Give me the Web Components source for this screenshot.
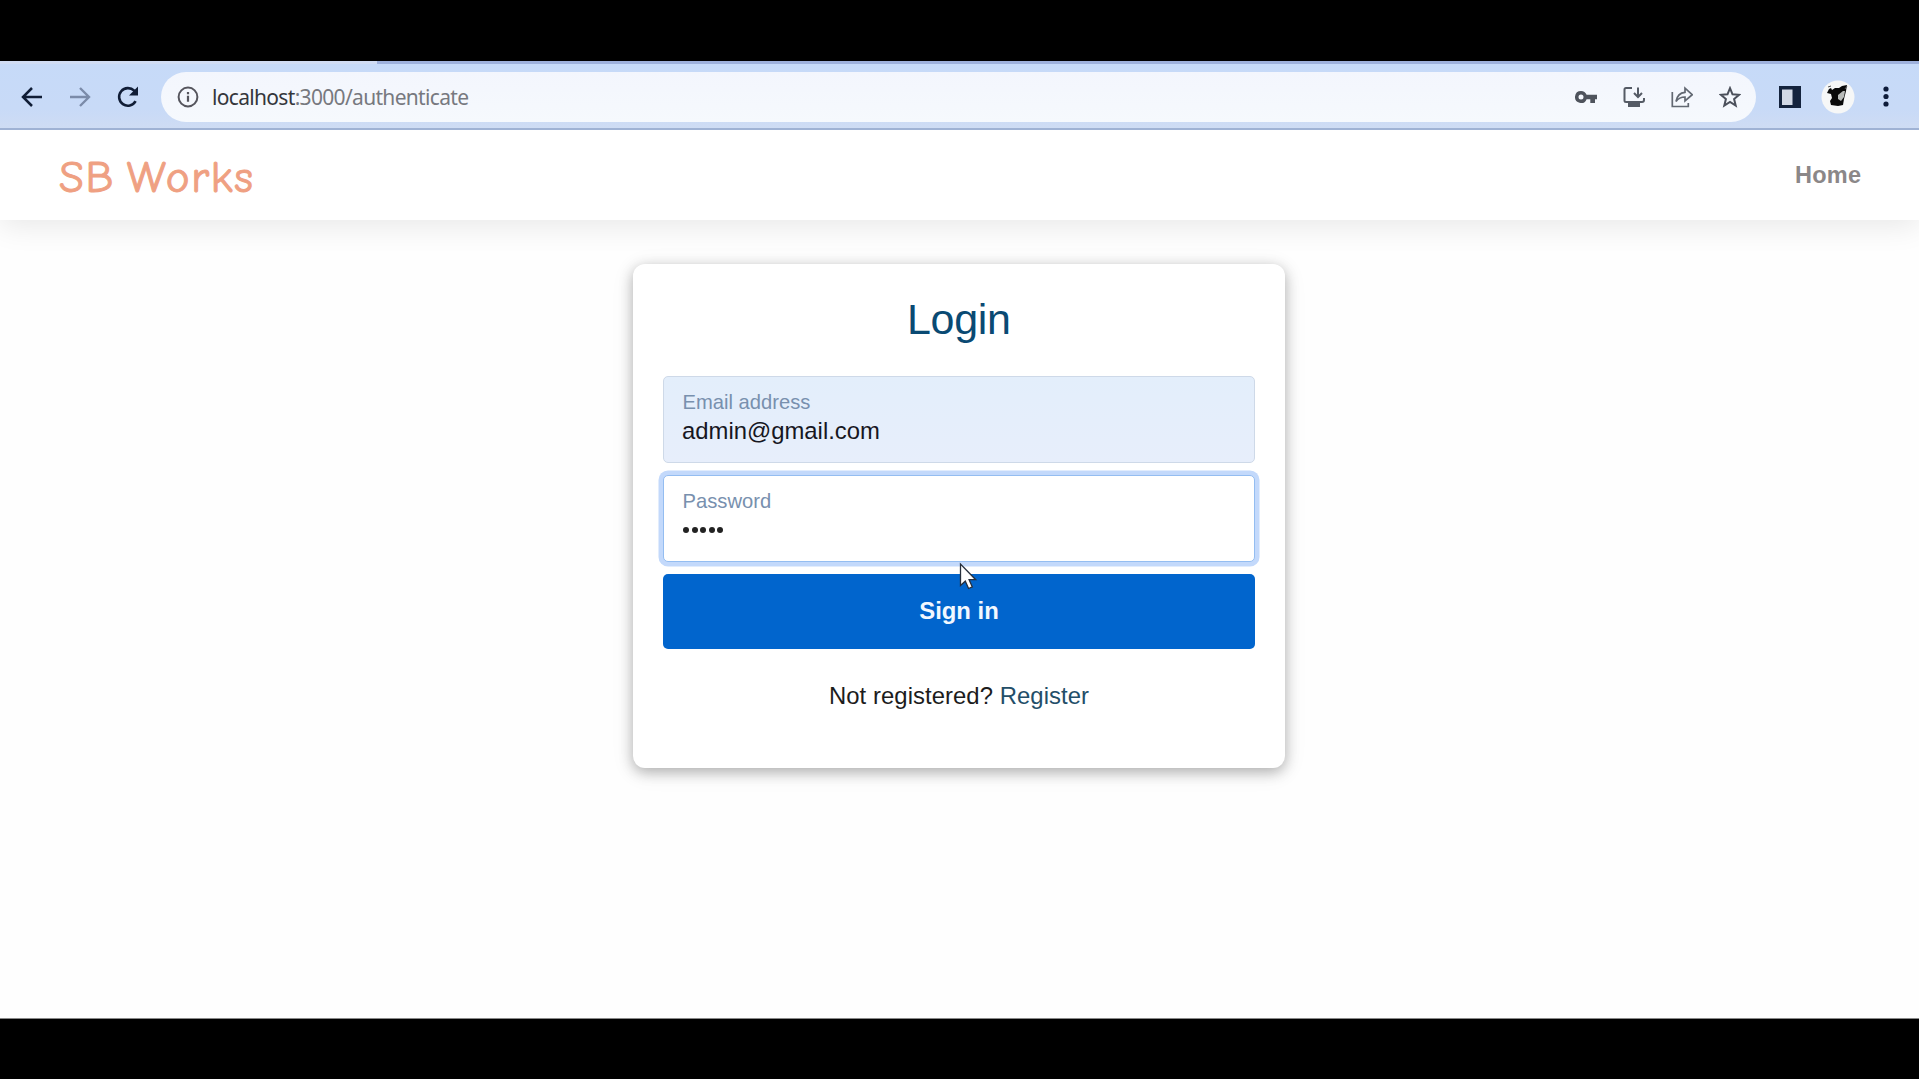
<!DOCTYPE html>
<html lang="en"><head><meta charset="utf-8"><title>SB Works</title>
<style>
body{margin:0;background:#000;font-family:"Liberation Sans",Arial,sans-serif}
</style></head><body>
<sb-screen></sb-screen>
<script>
const define=(name,html,init)=>customElements.define(name,class extends HTMLElement{
  connectedCallback(){
    if(this.shadowRoot)return;
    const t=document.createElement('template');
    t.innerHTML=html;
    this.attachShadow({mode:'open'}).append(t.content.cloneNode(true));
    if(init)init(this);
  }
});

// Text that spreads its letters over a given width
define('fit-text',`<style>:host{display:block;white-space:nowrap}span{display:inline-block}</style><span><slot></slot></span>`,el=>{
  const s=el.shadowRoot.querySelector('span'),n=el.textContent.length;
  const w=s.getBoundingClientRect().width;
  if(w&&el.hasAttribute('w')){
    const sp=(+el.getAttribute('w')-w)/(n-1);
    s.style.letterSpacing=sp+'px';s.style.marginRight=-sp+'px';
  }
});

define('browser-bar',`<style>
:host{display:flex;box-sizing:border-box;height:69px;align-items:center;padding:2px 20px 0 21px;
 background:linear-gradient(90deg,#d0dcf3 0 377px,#9eb1dc 377px) 0 0/100% 3px no-repeat,linear-gradient(#9fb2d4,#9fb2d4) 0 100%/100% 2px no-repeat,linear-gradient(#c6daf8 0,#c8daf7 70%,#cfdcf3 100%)}
svg{display:block;flex:none}
.nav{display:flex;gap:26px;margin-right:22px}
.box{flex:none;box-sizing:border-box;width:1595px;height:50px;border-radius:25px;background:linear-gradient(#f3f6fd,#f6f9fd);display:flex;align-items:center;padding:0 15px 0 16px}
.url{display:flex;font:21px/30px "Noto Sans","Open Sans",sans-serif;margin-left:13px;color:#77797f;flex:1}
.url b{font-weight:400;color:#34363b}
.icons{display:flex;gap:26px}
.right{display:flex;align-items:center;margin-left:23px}
</style>
<div class="nav">
<svg width="22" height="22" viewBox="0 0 22 22" fill="none" stroke="#101d36" stroke-width="2.5"><path d="M21 11H2.5M11 2L2 11l9 9"/></svg>
<svg width="22" height="22" viewBox="0 0 22 22" fill="none" stroke="#7b8ba9" stroke-width="2.4"><path d="M1 11h18.5M11 2l9 9-9 9"/></svg>
<svg width="22" height="22" viewBox="0 0 22 22" fill="none" stroke="#101d36" stroke-width="2.6"><path d="M18.6 15.2A8.8 8.8 0 1 1 17.2 4.7L19 6.8"/><path d="M21 .5v9h-9z" fill="#101d36" stroke="none"/></svg>
</div>
<div class="box">
<svg width="22" height="22" viewBox="0 0 22 22" fill="none" stroke="#55555d" stroke-width="2"><circle cx="11" cy="11" r="9.4"/><path d="M11 9.8v6M11 6v2.2" stroke-width="2.2"/></svg>
<div class="url"><fit-text w="257"><b>localhost</b>:3000/authenticate</fit-text></div>
<div class="icons">
<svg width="22" height="22" viewBox="0 0 22 22"><path fill="#4e535c" fill-rule="evenodd" d="M6 5a6 6 0 1 0 5.6 8.2h3.7V17H20v-3.8h2V8.8H11.6A6 6 0 0 0 6 5zm0 3.5a2.5 2.5 0 1 1 0 5 2.5 2.5 0 0 1 0-5z"/></svg>
<svg width="22" height="22" viewBox="0 0 22 22" fill="none" stroke="#555b65" stroke-width="2"><path d="M9 2H3q-1.500 0-1.500 1.500v11Q1.500 16 3 16h16q2 0 2-2v-2M15 1.500v9M11 7l4 4 4-4"/><path d="M5 19h12" stroke-width="4"/></svg>
<svg width="22" height="22" viewBox="0 0 22 22" fill="none" stroke="#626872" stroke-width="1.700"><path d="M1.300 6v14.500h16V17"/><path d="M5 15.500C6 9.500 9 6.700 14 6.300V2.200l7.200 6.500L14 15v-4c-4 0-6.500 1-9 4.500z"/></svg>
<svg width="22" height="22" viewBox="0 0 22 22"><path d="M11 2.200l2.500 6.100 6.600.5-5 4.300 1.600 6.400-5.700-3.500-5.700 3.500 1.600-6.400-5-4.300 6.600-.5z" fill="none" stroke="#4b505b" stroke-width="2"/></svg>
</div></div>
<div class="right">
<svg width="22" height="22" viewBox="0 0 22 22"><path fill="#14233d" d="M0 0h22v22H0z"/><path fill="#d2d9e6" d="M3 3.500h10.500V19H3z"/></svg>
<svg width="34" height="34" viewBox="0 0 34 34" style="margin-left:20px"><circle cx="17" cy="17" r="16.500" fill="#f6f7f7"/><path fill="#0a0a0a" d="M8 9l2-1 1 2 3-2 4 0 3-2 5-1-1 6-2 8-1 6-5 1-7-1-1-4 2-3-1-4-4-1z"/><path fill="#b8bbb9" d="M17 15l5-4 2 0-1 6-3 4-3-2z"/><path d="M7 7l3-1M24 9l2-3" stroke="#555"/></svg>
<svg width="6" height="22" viewBox="0 0 6 22" fill="#0d1b3a" style="margin-left:28px"><circle cx="3" cy="3" r="2.600"/><circle cx="3" cy="10.500" r="2.600"/><circle cx="3" cy="18" r="2.600"/></svg>
</div>`);

define('site-header',`<style>
:host{display:flex;box-sizing:border-box;height:90px;padding:0 58px;align-items:center;justify-content:space-between;background:#fff;box-shadow:0 6px 28px rgba(0,0,0,.09);position:relative}
.logo{font:400 45px/60px "Comic Sans MS","Comic Neue","Noto Sans",sans-serif;color:#efa082;-webkit-text-stroke:1px #efa082;word-spacing:-5px;padding:3px 0 0 1px}
.home{font:bold 23.5px/30px "Liberation Sans",Arial,sans-serif;color:#8b8788}
</style><fit-text class="logo" w="194">SB Works</fit-text><fit-text class="home" w="66">Home</fit-text>`);

define('float-field',`<style>
:host{display:block;box-sizing:border-box;height:87px;border:1px solid #ced9e8;border-radius:5px;padding:13px 18px;background:#fff}
:host([filled]){background:linear-gradient(#e3eefb,#e7eefb)}
:host([focused]){border-color:#94bdf1;box-shadow:0 0 0 4.500px #c3d9fb}
.l{font-size:20.200px;line-height:24px;color:#7890ae;margin-left:.5px}
.v{font-size:23.870px;line-height:30px;margin-top:2px;color:#17171f}
</style><div class="l"><slot name="label"></slot></div><div class="v"><slot></slot></div>`);

define('pass-dots',`<style>:host{display:flex;gap:2.500px;height:30px;align-items:center;padding-left:1px}i{width:6px;height:6px;border-radius:50%;background:#222}</style><i></i><i></i><i></i><i></i><i></i>`);

define('login-card',`<style>
:host{display:flex;flex-direction:column;box-sizing:border-box;width:652px;height:504px;margin-right:1px;border-radius:12px;background:#fff;padding:30px;box-shadow:0 4px 14px rgba(0,0,0,.28),0 4px 24px rgba(0,0,0,.08)}
h2{margin:0 0 32px;font:400 43px/50px "Liberation Sans",Arial,sans-serif;color:#0a4a73;display:flex;justify-content:center}
float-field+float-field{margin-top:12px}
button{border:0;margin:12px 0 0;padding:0 0 1px;height:75px;border-radius:5px;background:#0165cd;color:#f2f8ff;font:bold 23.870px/30px "Liberation Sans",Arial,sans-serif}
p{margin:29px 0 0;font-size:23.870px;line-height:36px;color:#1c1c1c;display:flex;justify-content:center}
a{color:#234e68}
</style>
<h2><fit-text w="104">Login</fit-text></h2>
<float-field filled><span slot="label">Email address</span>admin@gmail.com</float-field>
<float-field focused><span slot="label">Password</span><pass-dots></pass-dots></float-field>
<button>Sign in</button>
<p><fit-text w="260">Not registered? <a>Register</a></fit-text></p>`);

define('mouse-pointer',`<style>:host{display:block;position:absolute;left:959px;top:562px}svg{display:block}</style>
<svg width="20" height="30" viewBox="0 0 20 30"><path d="M1.500 2v21.500l4.800-4.300 3.300 7.300 3.700-1.600-3.200-7.200h6.600z" fill="#fff" stroke="#262f3d" stroke-width="1.300"/></svg>`);

define('sb-screen',`<style>
:host{display:flex;flex-direction:column;box-sizing:border-box;width:1919px;height:1079px;padding:61px 0 60px;background:#000;overflow:hidden}
main{flex:1;display:flex;flex-direction:column;background:#fefefe;border-bottom:1px solid #888;box-sizing:border-box;overflow:hidden}
section{display:flex;justify-content:center;padding-top:44px}
</style><browser-bar></browser-bar><main><site-header></site-header><section><login-card></login-card></section></main><mouse-pointer></mouse-pointer>`);
</script></body></html>
